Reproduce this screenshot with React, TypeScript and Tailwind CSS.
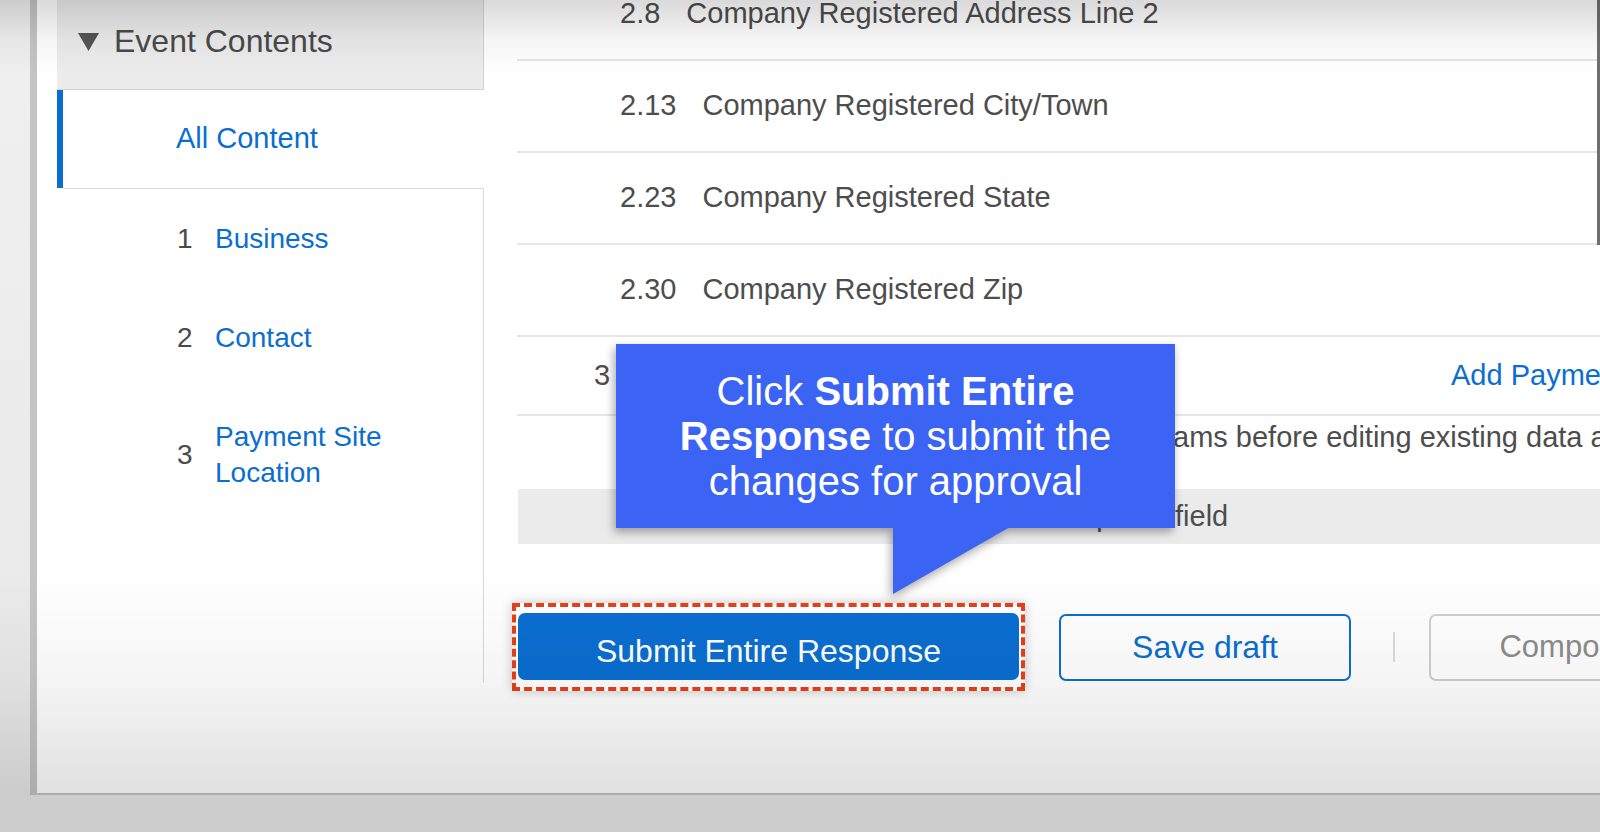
import { Fragment } from 'react'

const FIELDS = [
  ['2.8', 'Company Registered Address Line 2'],
  ['2.13', 'Company Registered City/Town'],
  ['2.23', 'Company Registered State'],
  ['2.30', 'Company Registered Zip'],
] as const

const SECTIONS = [
  { n: '1', label: ['Business'] },
  { n: '2', label: ['Contact'] },
  { n: '3', label: ['Payment Site', 'Location'] },
]

function Sidebar() {
  return (
    <aside className="ml-[20px] flex w-[427px] shrink-0 flex-col">
      <div className="flex h-[90px] items-center gap-[15px] border-r border-b border-[#d3d3d3] bg-[#ececec] pb-[8px] pl-[21px] text-[32px] text-[#4a4a4a]">
        <svg width="21" height="18" viewBox="0 0 21 18" className="mt-[2px]">
          <polygon points="0,0 21,0 10.5,18" fill="#555" />
        </svg>
        <span>Event Contents</span>
      </div>

      <div className="flex h-[98px] items-center border-l-[6px] border-[#0a6ed1] bg-white pl-[113px] text-[29px] text-[#0a6ed1]">
        All Content
      </div>

      <div className="ml-[6px] flex h-[495px] flex-col gap-[63px] border-t border-r border-[#dadada] bg-white pt-[32px] pl-[114px] text-[28px] leading-[36px]">
        {SECTIONS.map((s) => (
          <div key={s.n} className="flex items-center">
            <span className="w-[38px] shrink-0 text-[#4a4a4a]">{s.n}</span>
            <span className="text-[#0a6ed1]">
              {s.label.map((line, i) => (
                <Fragment key={line}>
                  {i > 0 ? <br /> : null}
                  {line}
                </Fragment>
              ))}
            </span>
          </div>
        ))}
      </div>
    </aside>
  )
}

function FieldRow({ num, label }: { num: string; label: string }) {
  return (
    <div className="flex h-[92px] items-center gap-[26px] border-b-2 border-[#e6e6e6] pl-[103px]">
      <span>{num}</span>
      <span>{label}</span>
    </div>
  )
}

function Content() {
  return (
    <main className="-mt-[31px] flex min-w-0 flex-1 flex-col overflow-hidden bg-white pl-[33px] text-[29px] text-[#4d4d4d]">
      <div className="border-r-[3px] border-[#6f6f6f]">
        {FIELDS.slice(0, 3).map(([num, label]) => (
          <FieldRow key={num} num={num} label={label} />
        ))}
      </div>
      <FieldRow num={FIELDS[3][0]} label={FIELDS[3][1]} />

      <div className="flex h-[79px] items-center border-b-2 border-[#e6e6e6] pl-[77px]">
        <span className="w-[857px] shrink-0 whitespace-nowrap">3&nbsp;&nbsp;&nbsp;Payment Site Location</span>
        <span className="whitespace-nowrap text-[#0a6ed1]">Add Payment Site Location</span>
      </div>

      <div className="flex h-[73px] items-start whitespace-nowrap pl-[103px]">
        <span className="inline-block w-[553px] shrink-0 overflow-hidden text-right">Review existing progr</span>
        <span>ams before editing existing data and adding new locations</span>
      </div>

      <div className="ml-px flex h-[55px] items-center whitespace-nowrap bg-[#ebebeb] pl-[102px]">
        <span className="inline-block w-[547px] shrink-0 overflow-hidden text-right">* Indicates a required</span>
        <span className="ml-[8px]">field</span>
      </div>

      <div className="mt-[59px] -ml-[5px] flex items-center">
        <div className="shrink-0 border-4 border-dashed border-[#e6401c] px-[2px] pt-[6px] pb-[7px] shadow-[0_0_10px_rgba(0,0,0,0.22)]">
          <button
            type="button"
            className="flex h-[67px] w-[501px] items-center justify-center rounded-[7px] bg-[#0a6ed1] pt-[9px] text-[32px] text-white"
          >
            Submit Entire Response
          </button>
        </div>
        <button
          type="button"
          className="ml-[34px] flex h-[67px] w-[292px] shrink-0 items-center justify-center rounded-[7px] border-2 border-[#0a6ed1] bg-white text-[32px] text-[#0a6ed1]"
        >
          Save draft
        </button>
        <div className="ml-[42px] h-[30px] w-[2px] shrink-0 bg-[#dcdcdc]" />
        <button
          type="button"
          className="ml-[34px] flex h-[67px] w-[408px] shrink-0 items-center justify-center rounded-[7px] border-2 border-[#cfcfcf] bg-white text-[31px] text-[#8c8c8c]"
        >
          Compose Message
        </button>
      </div>
    </main>
  )
}

export default function App() {
  return (
    <div className="relative h-[832px] w-[1600px] overflow-hidden bg-[#cdcdcd] font-['Liberation_Sans',Arial,sans-serif]">
      <div className="relative flex h-[795px]">
        <div className="w-[30px] shrink-0 bg-[linear-gradient(to_bottom,#f0f0f0,#e8e8e8)]" />
        <div className="flex min-w-0 flex-1 border-b-2 border-l-[7px] border-[#c4c4c4] bg-white">
          <Sidebar />
          <Content />
        </div>

        {/* video vignette */}
        <div className="pointer-events-none absolute inset-0 bg-[linear-gradient(to_bottom,rgba(0,0,0,0.15)_0px,rgba(0,0,0,0.04)_40px,rgba(0,0,0,0)_75px,rgba(0,0,0,0)_570px,rgba(0,0,0,0.04)_680px,rgba(0,0,0,0.12)_795px)]" />
      </div>

      {/* callout */}
      <div className="absolute top-[344px] left-[616px] drop-shadow-[-2px_4px_5px_rgba(0,0,0,0.35)]">
        <div className="flex h-[184px] w-[559px] flex-col justify-center bg-[#3b64f5] text-center text-[40px] leading-[45px] text-white">
          <div>
            Click <b>Submit Entire</b>
          </div>
          <div>
            <b>Response</b> to submit the
          </div>
          <div>changes for approval</div>
        </div>
        <svg width="117" height="67" viewBox="0 0 117 67" className="absolute top-[183px] left-[277px]">
          <polygon points="0,0 117,0 0,67" fill="#3b64f5" />
        </svg>
      </div>
    </div>
  )
}
